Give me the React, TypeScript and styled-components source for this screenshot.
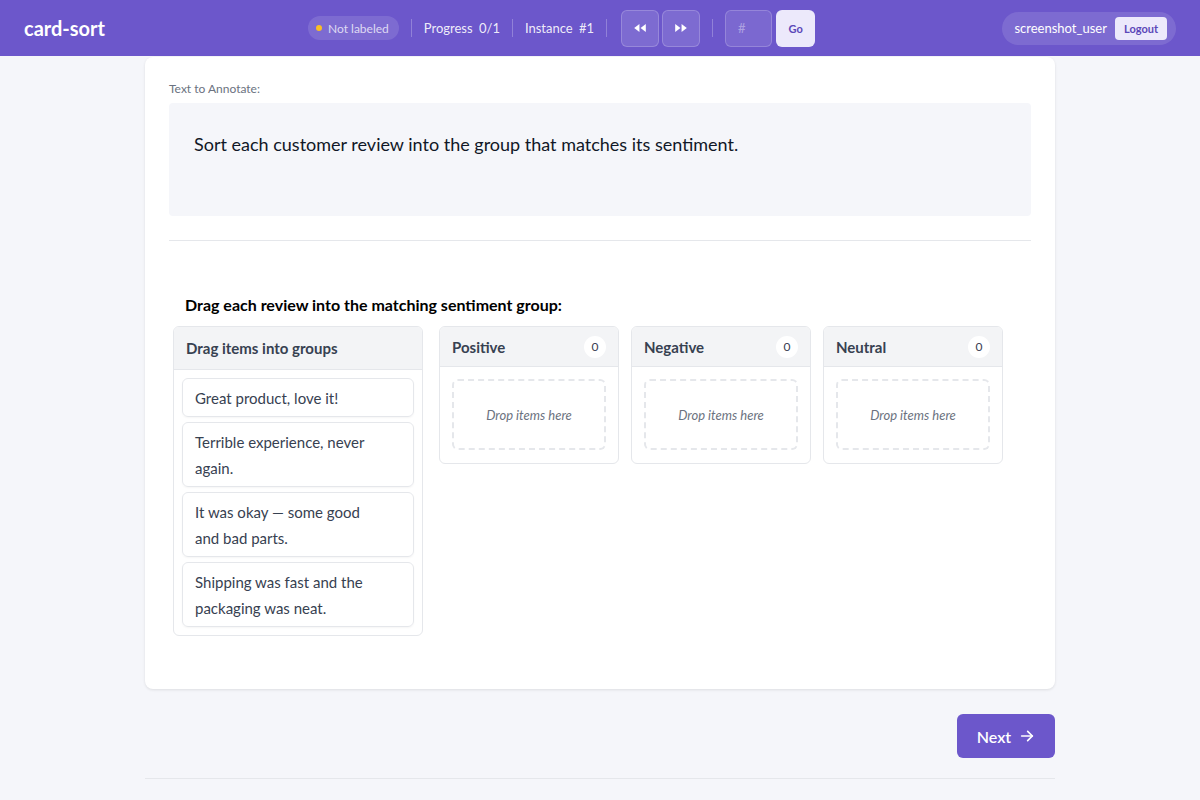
import React from 'react';
import styled, { createGlobalStyle } from 'styled-components';

const GlobalStyle = createGlobalStyle`
  body {
    margin: 0;
    background-color: #f5f6fa;
    font-family: 'Lato', 'Noto Sans', sans-serif;
    color: #111827;
  }
`;

const Page = styled.div`
  min-height: 800px;
`;

const Header = styled.header`
  height: 56px;
  background-color: #6c57cb;
  display: flex;
  align-items: center;
  padding: 0 24px;
  box-sizing: border-box;
`;

const Logo = styled.div`
  font-size: 20px;
  font-weight: 700;
  color: #ffffff;
  width: 284px;
`;

const Center = styled.div`
  flex: 1;
  display: flex;
  align-items: center;
  gap: 12px;
`;

const StatusPill = styled.div`
  display: flex;
  align-items: center;
  gap: 6px;
  height: 24px;
  padding: 0 10px 0 8px;
  border-radius: 12px;
  background-color: rgba(255, 255, 255, 0.12);
  color: rgba(255, 255, 255, 0.75);
  font-size: 12px;
`;

const Dot = styled.span`
  width: 6px;
  height: 6px;
  border-radius: 50%;
  background-color: #fbbf24;
`;

const Sep = styled.span`
  width: 1px;
  height: 18px;
  background-color: rgba(255, 255, 255, 0.25);
`;

const Meta = styled.span`
  font-size: 13px;
  color: rgba(255, 255, 255, 0.9);
  word-spacing: 3px;
`;

const NavGroup = styled.div`
  display: flex;
  gap: 3px;
  margin-left: 2px;
`;

const NavButton = styled.button`
  width: 38px;
  height: 37px;
  border-radius: 6px;
  border: 1px solid rgba(255, 255, 255, 0.2);
  background-color: rgba(255, 255, 255, 0.12);
  color: #ffffff;
  display: flex;
  align-items: center;
  justify-content: center;
  padding: 0;
`;

const JumpInput = styled.input`
  width: 47px;
  height: 37px;
  box-sizing: border-box;
  border-radius: 6px;
  border: 1px solid rgba(255, 255, 255, 0.2);
  background-color: rgba(255, 255, 255, 0.1);
  color: #ffffff;
  font-size: 13px;
  padding: 0 12px;
  font-family: inherit;
  &::placeholder {
    color: rgba(255, 255, 255, 0.4);
  }
`;

const GoButton = styled.button`
  width: 39px;
  height: 37px;
  border-radius: 6px;
  border: none;
  background-color: #ece9fb;
  color: #5b47b8;
  font-size: 11px;
  font-weight: 700;
  font-family: inherit;
`;

const JumpGroup = styled.div`
  display: flex;
  gap: 4px;
`;

const UserPill = styled.div`
  display: flex;
  align-items: center;
  gap: 8px;
  height: 33px;
  padding: 0 9px 0 12px;
  border-radius: 17px;
  background-color: rgba(255, 255, 255, 0.12);
  color: #ffffff;
  font-size: 13px;
`;

const LogoutButton = styled.button`
  height: 23px;
  padding: 0 9px;
  border-radius: 4px;
  border: none;
  background-color: #ece9fb;
  color: #5b47b8;
  font-size: 11px;
  font-weight: 700;
  font-family: inherit;
`;

const Main = styled.main`
  width: 910px;
  margin: 1px auto 0;
`;

const Card = styled.section`
  background-color: #ffffff;
  border-radius: 8px;
  box-shadow: 0 1px 3px rgba(0, 0, 0, 0.1);
  padding: 24px 24px 53px;
`;

const Label = styled.div`
  font-size: 12px;
  color: #6b7280;
  margin-bottom: 7px;
`;

const TextBox = styled.div`
  background-color: #f5f6fa;
  border-radius: 4px;
  padding: 30px 25px;
  height: 113px;
  box-sizing: border-box;
  font-size: 18px;
  color: #111827;
`;

const Divider = styled.hr`
  border: none;
  border-top: 1px solid #e5e7eb;
  margin: 24px 0 0;
`;

const SortArea = styled.div`
  padding: 54px 4px 0;
`;

const Prompt = styled.div`
  font-size: 16px;
  font-weight: 700;
  color: #000000;
  margin-left: 12px;
  margin-bottom: 12px;
`;

const Board = styled.div`
  display: flex;
  align-items: flex-start;
  gap: 12px;
`;

const Column = styled.div<{ $width: number }>`
  width: ${p => p.$width}px;
  box-sizing: border-box;
  border: 1px solid #e5e7eb;
  border-radius: 6px;
  background-color: #ffffff;
  overflow: hidden;
`;

const Pool = styled(Column)`
  margin-right: 4px;
`;

const ColumnHeader = styled.div<{ $height: number }>`
  height: ${p => p.$height}px;
  background-color: #f3f4f6;
  border-bottom: 1px solid #e5e7eb;
  display: flex;
  align-items: center;
  justify-content: space-between;
  padding: 0 12px;
  font-size: 15px;
  font-weight: 700;
  color: #374151;
`;

const Count = styled.span`
  width: 22px;
  height: 22px;
  border-radius: 50%;
  background-color: #ffffff;
  display: flex;
  align-items: center;
  justify-content: center;
  font-size: 12px;
  font-weight: 400;
  color: #374151;
`;

const ItemList = styled.div`
  padding: 8px;
  display: flex;
  flex-direction: column;
  gap: 5px;
`;

const Item = styled.div`
  border: 1px solid #e5e7eb;
  border-radius: 6px;
  padding: 6px 30px 5px 12px;
  font-size: 15px;
  line-height: 26px;
  color: #374151;
  box-shadow: 0 1px 2px rgba(0, 0, 0, 0.04);
`;

const DropZone = styled.div`
  margin: 12px 12px 13px;
  height: 71px;
  box-sizing: border-box;
  border: 2px dashed #e5e7eb;
  border-radius: 6px;
  display: flex;
  align-items: center;
  justify-content: center;
  font-size: 13px;
  font-style: italic;
  color: #6b7280;
`;

const Footer = styled.div`
  display: flex;
  justify-content: flex-end;
  padding: 25px 0 20px;
  border-bottom: 1px solid #e5e7eb;
`;

const NextButton = styled.button`
  height: 44px;
  width: 98px;
  border-radius: 6px;
  border: none;
  background-color: #6c57cb;
  color: #ffffff;
  font-size: 16px;
  font-weight: 600;
  font-family: inherit;
  display: flex;
  align-items: center;
  justify-content: center;
  gap: 8px;
`;

const reviews = [
  'Great product, love it!',
  'Terrible experience, never again.',
  'It was okay — some good and bad parts.',
  'Shipping was fast and the packaging was neat.',
];

const groups = ['Positive', 'Negative', 'Neutral'];

const Rewind = () => (
  <svg width="14" height="14" viewBox="0 0 24 24" fill="currentColor">
    <polygon points="11 19 2 12 11 5 11 19" />
    <polygon points="22 19 13 12 22 5 22 19" />
  </svg>
);

const Forward = () => (
  <svg width="14" height="14" viewBox="0 0 24 24" fill="currentColor">
    <polygon points="13 19 22 12 13 5 13 19" />
    <polygon points="2 19 11 12 2 5 2 19" />
  </svg>
);

const Arrow = () => (
  <svg width="16" height="16" viewBox="0 0 24 24" fill="none" stroke="currentColor" strokeWidth="2.5" strokeLinecap="round" strokeLinejoin="round">
    <line x1="4" y1="12" x2="20" y2="12" />
    <polyline points="13 5 20 12 13 19" />
  </svg>
);

const App: React.FC = () => {
  return (
    <Page>
      <GlobalStyle />
      <Header>
        <Logo>card-sort</Logo>
        <Center>
          <StatusPill>
            <Dot />
            Not labeled
          </StatusPill>
          <Sep />
          <Meta>Progress 0/1</Meta>
          <Sep />
          <Meta>Instance #1</Meta>
          <Sep />
          <NavGroup>
            <NavButton><Rewind /></NavButton>
            <NavButton><Forward /></NavButton>
          </NavGroup>
          <Sep />
          <JumpGroup>
            <JumpInput placeholder="#" />
            <GoButton>Go</GoButton>
          </JumpGroup>
        </Center>
        <UserPill>
          screenshot_user
          <LogoutButton>Logout</LogoutButton>
        </UserPill>
      </Header>

      <Main>
        <Card>
          <Label>Text to Annotate:</Label>
          <TextBox>Sort each customer review into the group that matches its sentiment.</TextBox>
          <Divider />
          <SortArea>
            <Prompt>Drag each review into the matching sentiment group:</Prompt>
            <Board>
              <Pool $width={250}>
                <ColumnHeader $height={42}>Drag items into groups</ColumnHeader>
                <ItemList>
                  {reviews.map(review => (
                    <Item key={review}>{review}</Item>
                  ))}
                </ItemList>
              </Pool>
              {groups.map(group => (
                <Column key={group} $width={180}>
                  <ColumnHeader $height={39}>
                    {group}
                    <Count>0</Count>
                  </ColumnHeader>
                  <DropZone>Drop items here</DropZone>
                </Column>
              ))}
            </Board>
          </SortArea>
        </Card>
        <Footer>
          <NextButton>
            Next <Arrow />
          </NextButton>
        </Footer>
      </Main>
    </Page>
  );
};

export default App;
